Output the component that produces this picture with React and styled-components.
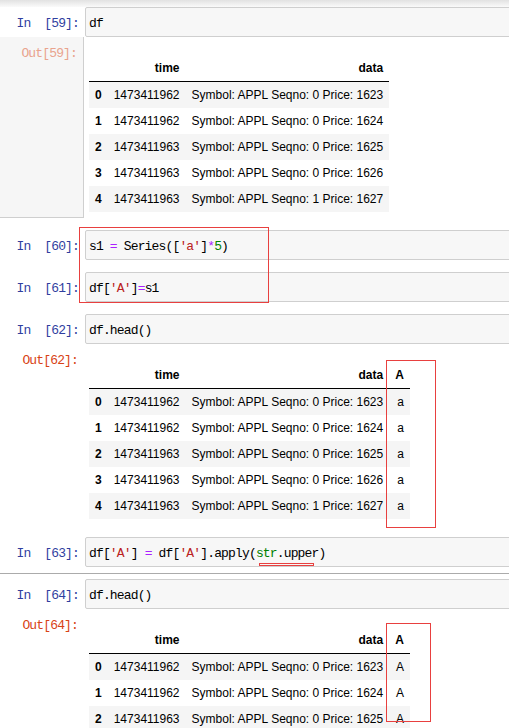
import styled, { createGlobalStyle } from "styled-components";

const GlobalStyle = createGlobalStyle`
  html, body {
    margin: 0;
    padding: 0;
    background: #fff;
    overflow: hidden;
  }
  body {
    font-family: "Liberation Sans", Arial, sans-serif;
  }
`;

const Page = styled.div`
  position: relative;
  width: 100%;
  overflow: hidden;
  display: flex;
  flex-direction: column;
`;

const TopShade = styled.div`
  height: 7px;
  background: linear-gradient(to bottom, #e2e2e2, #fafafa);
`;

const Cell = styled.div`
  display: flex;
  flex-direction: column;
  padding-bottom: ${(p) => (p.$divider ? "6px" : "12px")};
  ${(p) => p.$divider && "border-bottom: 1px solid #ababab; margin-bottom: 5px;"}
`;

const Row = styled.div`
  display: flex;
  align-items: flex-start;
`;

const Prompt = styled.div`
  box-sizing: border-box;
  width: 85px;
  flex: none;
  padding: 8px 6px 0 0;
  text-align: right;
  font-family: "Liberation Mono", "Courier New", monospace;
  font-size: 13px;
  letter-spacing: -0.85px;
  line-height: 18px;
  white-space: pre;
  color: #303f9f;
`;

const OutPrompt = styled(Prompt)`
  width: 84px;
  align-self: stretch;
  padding-top: 8px;
  color: ${(p) => (p.$hover ? "#e9a38d" : "#d84315")};
  ${(p) =>
    p.$hover &&
    "background: #f6f6f6; border-right: 1px solid #cfcfcf; border-bottom: 1px solid #cfcfcf;"}
`;

const InputBox = styled.div`
  flex: 1;
  min-width: 0;
  margin-right: -4px;
  border: 1px solid #cfcfcf;
  border-radius: 2px;
  background: #f7f7f7;
  padding: 7px 3px 3px;
  font-family: "Liberation Mono", "Courier New", monospace;
  font-size: 13px;
  letter-spacing: -0.85px;
  line-height: 18px;
  white-space: pre;
  overflow: hidden;
  color: #000;
`;

const Tok = styled.span`
  color: ${(p) => p.$c};
`;

const OutputBody = styled.div`
  flex: 1;
  padding: 18px 0 6px 5px;
`;

const Table = styled.table`
  border-collapse: collapse;
  border-spacing: 0;
  font-size: 12px;
  color: #000;

  thead {
    border-bottom: 1px solid #000;
  }
  th,
  td {
    padding: 6px;
    line-height: 14px;
    text-align: right;
    vertical-align: middle;
    white-space: nowrap;
  }
  th {
    font-weight: bold;
  }
  tbody tr:nth-child(odd) {
    background: #f5f5f5;
  }
`;

const Mark = styled.div`
  position: absolute;
  box-sizing: border-box;
  border: 1px solid #e8403f;
  pointer-events: none;
`;

const rows = [
  ["1473411962", "Symbol: APPL Seqno: 0 Price: 1623"],
  ["1473411962", "Symbol: APPL Seqno: 0 Price: 1624"],
  ["1473411963", "Symbol: APPL Seqno: 0 Price: 1625"],
  ["1473411963", "Symbol: APPL Seqno: 0 Price: 1626"],
  ["1473411963", "Symbol: APPL Seqno: 1 Price: 1627"],
];

const Frame = ({ extra, count = 5 }) => (
  <Table>
    <thead>
      <tr>
        <th></th>
        <th>time</th>
        <th>data</th>
        {extra && <th>A</th>}
      </tr>
    </thead>
    <tbody>
      {rows.slice(0, count).map((r, i) => (
        <tr key={i}>
          <th>{i}</th>
          <td>{r[0]}</td>
          <td>{r[1]}</td>
          {extra && <td>{extra}</td>}
        </tr>
      ))}
    </tbody>
  </Table>
);

const In = ({ n, children, divider }) => (
  <Cell $divider={divider}>
    <Row>
      <Prompt>{`In\u00a0\u00a0[${n}]:`}</Prompt>
      <InputBox>{children}</InputBox>
    </Row>
  </Cell>
);

const InOut = ({ n, code, children, hover }) => (
  <Cell>
    <Row>
      <Prompt>{`In\u00a0\u00a0[${n}]:`}</Prompt>
      <InputBox>{code}</InputBox>
    </Row>
    <Row>
      <OutPrompt $hover={hover}>{`Out[${n}]:`}</OutPrompt>
      <OutputBody>{children}</OutputBody>
    </Row>
  </Cell>
);

const OP = "#aa22ff";
const STR = "#ba2121";
const NUM = "#008000";

export default function App() {
  return (
    <>
      <GlobalStyle />
      <Page>
        <TopShade />
        <InOut n={59} code="df" hover>
          <Frame />
        </InOut>
        <In n={60}>
          s1 <Tok $c={OP}>=</Tok> Series([<Tok $c={STR}>'a'</Tok>]<Tok $c={OP}>*</Tok>
          <Tok $c={NUM}>5</Tok>)
        </In>
        <In n={61}>
          df[<Tok $c={STR}>'A'</Tok>]<Tok $c={OP}>=</Tok>s1
        </In>
        <InOut n={62} code="df.head()">
          <Frame extra="a" />
        </InOut>
        <In n={63} divider>
          df[<Tok $c={STR}>'A'</Tok>] <Tok $c={OP}>=</Tok> df[<Tok $c={STR}>'A'</Tok>].apply(
          <Tok $c={NUM}>str</Tok>.upper)
        </In>
        <InOut n={64} code="df.head()">
          <Frame extra="A" count={3} />
        </InOut>

        <Mark style={{ left: 79, top: 227, width: 190, height: 76 }} />
        <Mark style={{ left: 386, top: 360, width: 50, height: 168 }} />
        <Mark style={{ left: 386, top: 623, width: 45, height: 99 }} />
        <Mark style={{ left: 259, top: 563, width: 55, height: 3 }} />
      </Page>
    </>
  );
}
